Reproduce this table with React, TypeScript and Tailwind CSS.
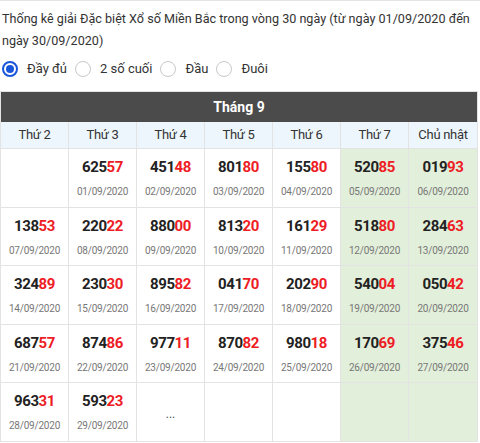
import { useState } from 'react';

type Cell = { num: string; date: string } | { more: true } | null;

const rows: Cell[][] = [
  [null, { num: '62557', date: '01/09/2020' }, { num: '45148', date: '02/09/2020' }, { num: '80180', date: '03/09/2020' }, { num: '15580', date: '04/09/2020' }, { num: '52085', date: '05/09/2020' }, { num: '01993', date: '06/09/2020' }],
  [{ num: '13853', date: '07/09/2020' }, { num: '22022', date: '08/09/2020' }, { num: '88000', date: '09/09/2020' }, { num: '81320', date: '10/09/2020' }, { num: '16129', date: '11/09/2020' }, { num: '51880', date: '12/09/2020' }, { num: '28463', date: '13/09/2020' }],
  [{ num: '32489', date: '14/09/2020' }, { num: '23030', date: '15/09/2020' }, { num: '89582', date: '16/09/2020' }, { num: '04170', date: '17/09/2020' }, { num: '20290', date: '18/09/2020' }, { num: '54004', date: '19/09/2020' }, { num: '05042', date: '20/09/2020' }],
  [{ num: '68757', date: '21/09/2020' }, { num: '87486', date: '22/09/2020' }, { num: '97711', date: '23/09/2020' }, { num: '87082', date: '24/09/2020' }, { num: '98018', date: '25/09/2020' }, { num: '17069', date: '26/09/2020' }, { num: '37546', date: '27/09/2020' }],
  [{ num: '96331', date: '28/09/2020' }, { num: '59323', date: '29/09/2020' }, { more: true }, null, null, null, null],
];

const days = ['Thứ 2', 'Thứ 3', 'Thứ 4', 'Thứ 5', 'Thứ 6', 'Thứ 7', 'Chủ nhật'];
const options = ['Đầy đủ', '2 số cuối', 'Đầu', 'Đuôi'];

export default function App() {
  const [mode, setMode] = useState(0);

  return (
    <div className="w-[480px] h-[443px] bg-white border-t border-[#e5e5e5] font-['Roboto',sans-serif] text-[#222] overflow-hidden">
      {/* Title */}
      <p className="px-[2px] pt-[7px] text-[12.6px] leading-[22px] text-[#333]">
        Thống kê giải Đặc biệt Xổ số Miền Bắc trong vòng 30 ngày (từ ngày 01/09/2020 đến ngày 30/09/2020)
      </p>

      {/* Options */}
      <div className="flex items-center h-[28px] mt-[3px] pl-[2px] text-[13px] text-[#333]">
        {options.map((o, i) => (
          <label key={o} className="flex items-center cursor-pointer mr-[8px]" onClick={() => setMode(i)}>
            <span
              className={`w-[16px] h-[16px] rounded-full border flex items-center justify-center ${
                mode === i ? 'border-[#1a56db] border-2' : 'border-[#c8c8c8]'
              }`}
            >
              {mode === i && <span className="w-[8px] h-[8px] rounded-full bg-[#1a56db]" />}
            </span>
            <span className="ml-[9px]">{o}</span>
          </label>
        ))}
      </div>

      {/* Calendar */}
      <div className="mt-[8px] w-[478px] border border-[#e3e3e3]">
        <div className="h-[30px] bg-[#4b4b4b] text-white font-bold text-[14px] flex items-center justify-center">
          Tháng 9
        </div>
        <div className="grid grid-cols-7">
          {days.map((d, i) => (
            <div
              key={d}
              className={`h-[26px] bg-[#eef6fd] flex items-center justify-center text-[13px] tracking-[-0.3px] text-[#333] border-[#e3e3e3] ${i < 6 ? 'border-r' : ''}`}
            >
              {d}
            </div>
          ))}
          {rows.map((row, r) =>
            row.map((c, i) => (
              <div
                key={`${r}-${i}`}
                className={`h-[58.5px] flex flex-col items-center border-t border-[#e3e3e3] ${i < 6 ? 'border-r' : ''} ${
                  i >= 5 ? 'bg-[#e2efda]' : 'bg-white'
                }`}
              >
                {c && 'num' in c && (
                  <>
                    <span className="mt-[7px] text-[15px] font-bold leading-[22px] tracking-[-0.4px] text-[#222]">
                      {c.num.slice(0, 3)}
                      <span className="text-[#ee1c25]">{c.num.slice(3)}</span>
                    </span>
                    <span className="mt-[7px] text-[10px] leading-[14px] tracking-[-0.2px] text-[#777]">{c.date}</span>
                  </>
                )}
                {c && 'more' in c && <span className="mt-[22px] text-[12px] text-[#555]">...</span>}
              </div>
            ))
          )}
        </div>
      </div>
    </div>
  );
}
